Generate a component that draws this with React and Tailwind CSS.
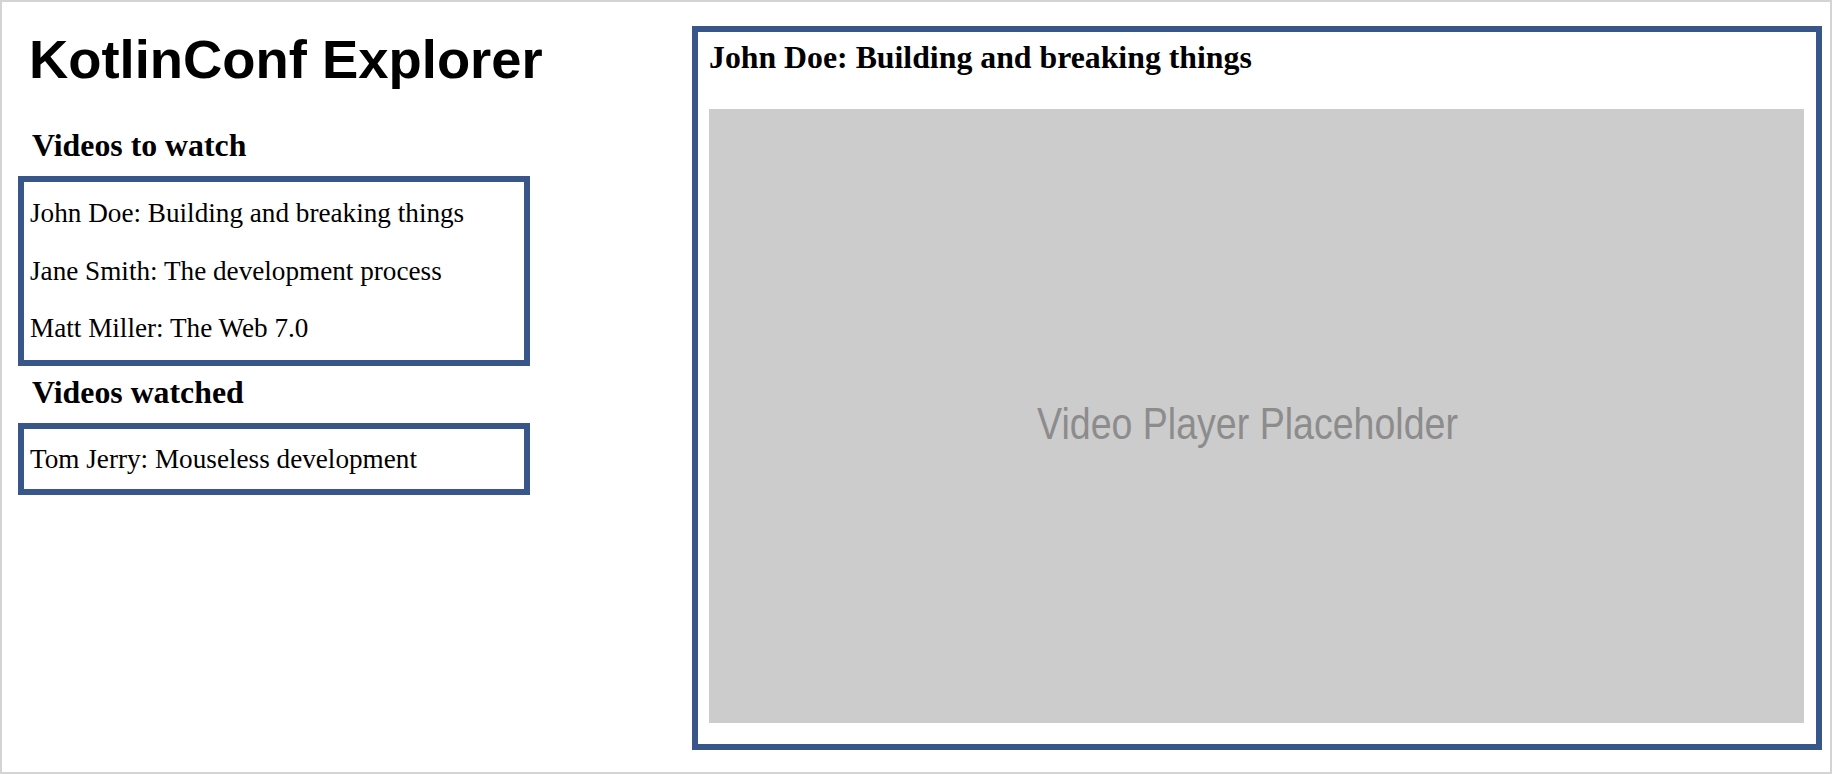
import React from 'react';

const toWatch = [
    'John Doe: Building and breaking things',
    'Jane Smith: The development process',
    'Matt Miller: The Web 7.0',
];

const watched = ['Tom Jerry: Mouseless development'];

const VideoList = ({ videos, className }) => (
    <div className={`border-[6px] border-[#39568b] pl-[6px] pr-2 flex flex-col gap-[26.5px] ${className}`}>
        {videos.map((v) => (
            <p key={v} className="text-[27.2px] leading-[31px] whitespace-nowrap">{v}</p>
        ))}
    </div>
);

export default function App() {
    return (
        <div className="h-screen w-full border-2 border-[#d4d4d4] bg-white flex items-start font-['Liberation_Serif','Times_New_Roman',serif] text-black overflow-hidden">
            <div className="ml-[16px] w-[512px] shrink-0 flex flex-col">
                <h1 className="mt-[27px] ml-[11px] font-['Liberation_Sans',Arial,sans-serif] text-[54.4px] leading-[62px] font-bold whitespace-nowrap">
                    KotlinConf Explorer
                </h1>
                <h3 className="mt-[37px] ml-[14px] text-[31.8px] leading-[36px] font-bold">Videos to watch</h3>
                <VideoList videos={toWatch} className="mt-[12px] py-[16px]" />
                <h3 className="mt-[9px] ml-[14px] text-[31.8px] leading-[36px] font-bold">Videos watched</h3>
                <VideoList videos={watched} className="mt-[12px] pt-[15px] pb-[14px]" />
            </div>

            <div className="ml-[162px] mt-[24px] w-[1130px] h-[724px] shrink-0 border-[6px] border-[#39568b] pl-[11px] pr-[12px] pt-[8px] pb-[21px] flex flex-col">
                <h3 className="text-[31.8px] leading-[36px] font-bold whitespace-nowrap">John Doe: Building and breaking things</h3>
                <div className="mt-[33px] flex-1 bg-[#cccccc] flex items-center justify-center pt-[16px] pr-[18px]">
                    <span className="font-['Liberation_Sans',Arial,sans-serif] text-[44.7px] text-[#8c8c8c] scale-x-[0.84] whitespace-nowrap">
                        Video Player Placeholder
                    </span>
                </div>
            </div>
        </div>
    );
}
